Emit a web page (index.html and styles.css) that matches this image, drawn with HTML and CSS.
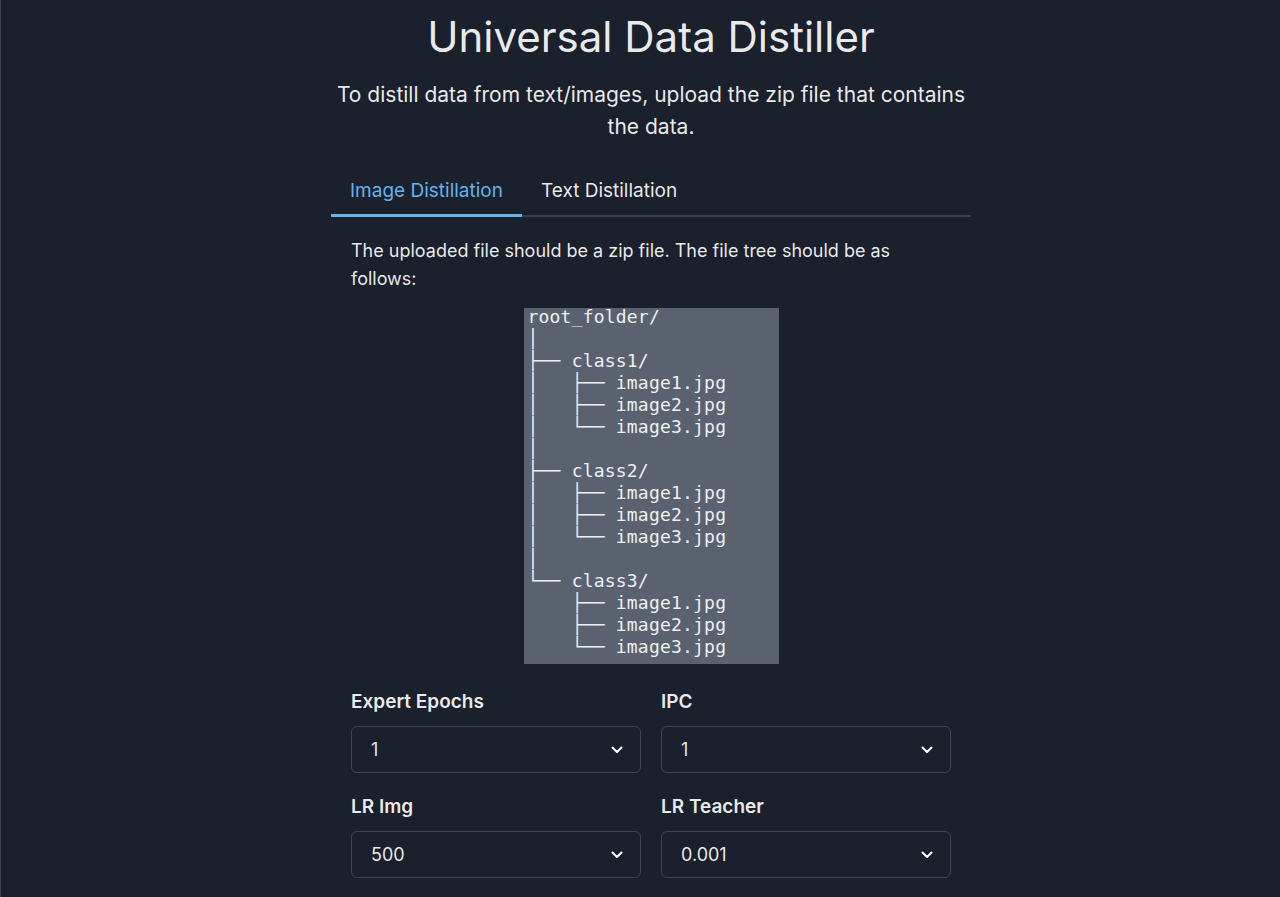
FILE: index.html
```html
<!DOCTYPE html>
<html lang="en">
<head>
<meta charset="utf-8">
<title>Universal Data Distiller</title>
<link rel="stylesheet" href="styles.css">
</head>
<body>
<main class="page">
  <h1 class="title">Universal Data Distiller</h1>
  <p class="subtitle">To distill data from text/images, upload the zip file that contains the data.</p>

  <div class="tabs">
    <div class="tab-list">
      <button class="tab tab-active">Image Distillation</button>
      <button class="tab">Text Distillation</button>
    </div>
    <section class="tab-panel">
      <p class="desc">The uploaded file should be a zip file. The file tree should be as follows:</p>
      <pre class="tree"><code class="tree-code">root_folder/
│
├── class1/
│   ├── image1.jpg
│   ├── image2.jpg
│   └── image3.jpg
│
├── class2/
│   ├── image1.jpg
│   ├── image2.jpg
│   └── image3.jpg
│
└── class3/
    ├── image1.jpg
    ├── image2.jpg
    └── image3.jpg</code></pre>

      <div class="form-grid">
        <div class="field">
          <label class="label">Expert Epochs</label>
          <div class="select"><span>1</span><svg class="chev" viewBox="0 0 12 8" width="12" height="8"><path d="M1.5 1.5 L6 6 L10.5 1.5" fill="none" stroke="currentColor" stroke-width="2" stroke-linecap="round" stroke-linejoin="round"/></svg></div>
        </div>
        <div class="field">
          <label class="label">IPC</label>
          <div class="select"><span>1</span><svg class="chev" viewBox="0 0 12 8" width="12" height="8"><path d="M1.5 1.5 L6 6 L10.5 1.5" fill="none" stroke="currentColor" stroke-width="2" stroke-linecap="round" stroke-linejoin="round"/></svg></div>
        </div>
        <div class="field">
          <label class="label">LR Img</label>
          <div class="select"><span>500</span><svg class="chev" viewBox="0 0 12 8" width="12" height="8"><path d="M1.5 1.5 L6 6 L10.5 1.5" fill="none" stroke="currentColor" stroke-width="2" stroke-linecap="round" stroke-linejoin="round"/></svg></div>
        </div>
        <div class="field">
          <label class="label">LR Teacher</label>
          <div class="select"><span>0.001</span><svg class="chev" viewBox="0 0 12 8" width="12" height="8"><path d="M1.5 1.5 L6 6 L10.5 1.5" fill="none" stroke="currentColor" stroke-width="2" stroke-linecap="round" stroke-linejoin="round"/></svg></div>
        </div>
      </div>
    </section>
  </div>
</main>
</body>
</html>
```

FILE: styles.css
```css
html, body {
  margin: 0;
  padding: 0;
}
body {
  background: #1a202c;
  color: rgba(255, 255, 255, 0.92);
  font-family: Inter, "Noto Sans", sans-serif;
  border-left: 1px solid #3c414b;
  padding-left: 21px;
  min-height: 897px;
  box-sizing: border-box;
  overflow: hidden;
}
.page {
  width: 640px;
  margin: 0 auto;
  padding-top: 10px;
}
.title {
  margin: 0;
  text-align: center;
  font-weight: 400;
  font-size: 42px;
  line-height: 54px;
  letter-spacing: 0;
}
.subtitle {
  margin: 15px 0 0;
  text-align: center;
  font-size: 21px;
  line-height: 32px;
  padding: 0;
}
.tabs {
  margin-top: 24px;
}
.tab-list {
  display: flex;
  border-bottom: 2px solid #3a3f48;
}
.tab {
  background: none;
  border: none;
  border-bottom: 3px solid transparent;
  margin-bottom: -2px;
  color: rgba(255, 255, 255, 0.92);
  font-family: inherit;
  font-size: 19px;
  line-height: 28px;
  padding: 10px 19px 9px;
  cursor: pointer;
}
.tab-active {
  color: #63b3ed;
  border-bottom-color: #63b3ed;
}
.tab-panel {
  padding: 20px;
}
.desc {
  margin: 0;
  font-size: 18px;
  line-height: 28px;
}
.tree {
  width: 246px;
  margin: 15px auto 0;
  padding: 1px 5px 1px 4px;
  background: #59626e;
  color: #eef0f3;
  font-family: "DejaVu Sans Mono", "Liberation Mono", monospace;
  font-size: 18px;
  line-height: 22px;
  letter-spacing: 0.2px;
}
.tree-code {
  display: block;
  font-family: inherit;
  margin: -3px 0 5px;
}
.form-grid {
  margin-top: 24px;
  display: grid;
  grid-template-columns: 1fr 1fr;
  column-gap: 20px;
  row-gap: 20px;
}
.field {
  display: flex;
  flex-direction: column;
}
.label {
  font-size: 19px;
  font-weight: 600;
  line-height: 27px;
  margin-bottom: 11px;
}
.select {
  height: 47px;
  box-sizing: border-box;
  border: 1px solid #3f4552;
  border-radius: 6px;
  display: flex;
  align-items: center;
  justify-content: space-between;
  padding: 0 17px 0 19px;
  font-size: 18px;
}
.chev {
  color: #ffffff;
}
```
